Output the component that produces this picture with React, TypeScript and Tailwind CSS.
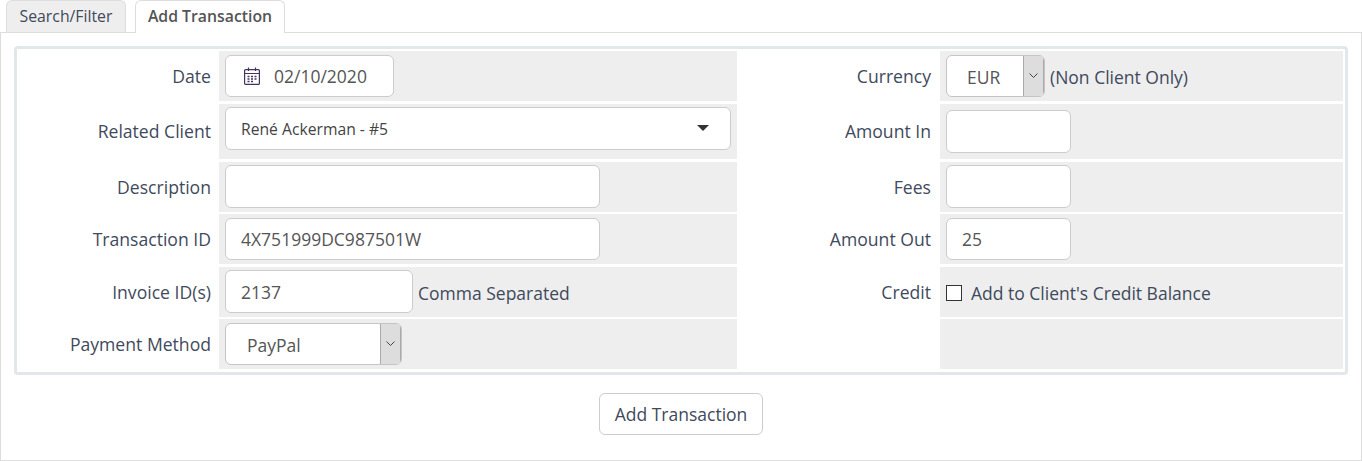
import React from 'react';

const inputClass =
  "rounded-[6px] border border-[#ccc] bg-white px-[15px] text-[17.5px] text-[#555] outline-none";

function Label({ right, children }: { right?: boolean; children?: React.ReactNode }) {
  return (
    <div className={`flex items-center justify-end text-[17.6px] text-[#3f4a5c] ${right ? 'pr-[9px]' : 'pr-2'}`}>
      {children}
    </div>
  );
}

function Field({ children }: { children?: React.ReactNode }) {
  return <div className="flex items-center bg-[#eee] pl-[6px] text-[17.5px] text-[#3f4a5c]">{children}</div>;
}

function Row({ className, children }: { className: string; children: React.ReactNode }) {
  return <div className={`grid grid-cols-[202px_518px_203px_403px] ${className}`}>{children}</div>;
}

function SelectBox({ value, width, textPad }: { value: string; width: string; textPad: string }) {
  return (
    <div className={`flex h-[42px] ${width} overflow-hidden rounded-[6px] border border-[#c4c4c4] bg-white`}>
      <div className={`flex flex-1 items-center pt-[2px] ${textPad} text-[17.5px] text-[#555]`}>{value}</div>
      <div className="flex w-[21px] items-center justify-center border-x border-[#aaa] bg-[#ddd] pb-px">
        <svg width="9" height="6" viewBox="0 0 9 6" fill="none" stroke="#444" strokeWidth="1">
          <path d="M0.5 0.5 L4.5 4.5 L8.5 0.5" />
        </svg>
      </div>
    </div>
  );
}

export default function App() {
  return (
    <div className="h-[461px] overflow-hidden bg-white font-['Open_Sans',sans-serif]">
      <div className="flex h-[32px] items-end gap-[9px] pl-[6px]">
        <div className="relative flex h-[32px] w-[120px] items-center justify-center rounded-t-[6px] border border-b-0 border-[#ddd] bg-[#eee] pt-px text-[15.8px] text-[#3f4a5c]">
          Search/Filter
        </div>
        <div className="relative z-10 mb-[-1px] flex h-[33px] w-[150px] items-center justify-center rounded-t-[6px] border border-b-0 border-[#ddd] bg-white text-[15.8px] font-semibold text-[#555]">
          Add Transaction
        </div>
      </div>
      <div className="h-[429px] border border-[#ddd] px-[13px] pt-[13px]">
        <div className="h-[329px] rounded-[4px] border-[3px] border-[#e2e7ea] pt-[2px]">
          <Row className="h-[50px]">
            <Label>Date</Label>
            <Field>
              <div className="flex h-[42px] w-[169px] items-center rounded-[6px] border border-[#ccc] bg-white pl-[18px] text-[#555]">
                <svg width="16" height="18" viewBox="0 0 16 18" fill="none" stroke="#46325c" strokeWidth="1.2">
                  <rect x="0.6" y="2.6" width="14.8" height="14.8" rx="1" />
                  <path d="M0.6 6.5 H15.4 M4.5 0.5 V4 M11.5 0.5 V4" />
                  <path d="M3.5 9.5 H5.5 M7 9.5 H9 M10.5 9.5 H12.5 M3.5 12 H5.5 M7 12 H9 M10.5 12 H12.5 M3.5 14.5 H5.5 M7 14.5 H9" strokeWidth="1.5" />
                </svg>
                <span className="ml-[14px] text-[17.5px]">02/10/2020</span>
              </div>
            </Field>
            <Label right>Currency</Label>
            <Field>
              <SelectBox value="EUR" width="w-[99px]" textPad="pl-[20px]" />
              <span className="ml-[5px] pt-[2px]">(Non Client Only)</span>
            </Field>
          </Row>
          <Row className="mt-[3px] h-[55px]">
            <Label>Related Client</Label>
            <Field>
              <div className="mb-[7px] flex h-[43px] w-[506px] items-center justify-between rounded-[6px] border border-[#ccc] bg-white pl-[15px] pr-[21px] text-[15.7px] text-[#444]">
                <span className="pt-[4px]">René Ackerman - #5</span>
                <span className="h-0 w-0 border-x-[6px] border-t-[6px] border-x-transparent border-t-[#333]" />
              </div>
            </Field>
            <Label right>Amount In</Label>
            <Field>
              <input className={`${inputClass} h-[43px] w-[125px]`} readOnly defaultValue="" />
            </Field>
          </Row>
          <Row className="mt-[3px] h-[50px]">
            <Label>Description</Label>
            <Field>
              <input className={`${inputClass} mb-px h-[43px] w-[375px]`} readOnly defaultValue="" />
            </Field>
            <Label right>Fees</Label>
            <Field>
              <input className={`${inputClass} mb-px h-[43px] w-[125px]`} readOnly defaultValue="" />
            </Field>
          </Row>
          <Row className="mt-[2px] h-[50px]">
            <Label>Transaction ID</Label>
            <Field>
              <input className={`${inputClass} h-[42px] w-[375px]`} readOnly defaultValue="4X751999DC987501W" />
            </Field>
            <Label right>Amount Out</Label>
            <Field>
              <input className={`${inputClass} h-[42px] w-[125px]`} readOnly defaultValue="25" />
            </Field>
          </Row>
          <Row className="mt-[3px] h-[50px]">
            <Label>Invoice ID(s)</Label>
            <Field>
              <input className={`${inputClass} mb-px h-[43px] w-[188px]`} readOnly defaultValue="2137" />
              <span className="ml-[5px] pt-[2px]">Comma Separated</span>
            </Field>
            <Label right>Credit</Label>
            <Field>
              <span className="mt-px h-[16px] w-[16px] border border-[#333] bg-white" />
              <span className="ml-[9px] pt-[2px]">Add to Client's Credit Balance</span>
            </Field>
          </Row>
          <Row className="mt-[2px] h-[50px]">
            <Label>Payment Method</Label>
            <Field>
              <SelectBox value="PayPal" width="w-[177px]" textPad="pl-[21px]" />
            </Field>
            <Label />
            <Field />
          </Row>
        </div>
        <div className="mt-[18px] flex justify-center">
          <button className="h-[42px] w-[164px] rounded-[6px] border border-[#ccc] bg-white text-[17.5px] text-[#3f4a5c]">
            Add Transaction
          </button>
        </div>
      </div>
    </div>
  );
}
